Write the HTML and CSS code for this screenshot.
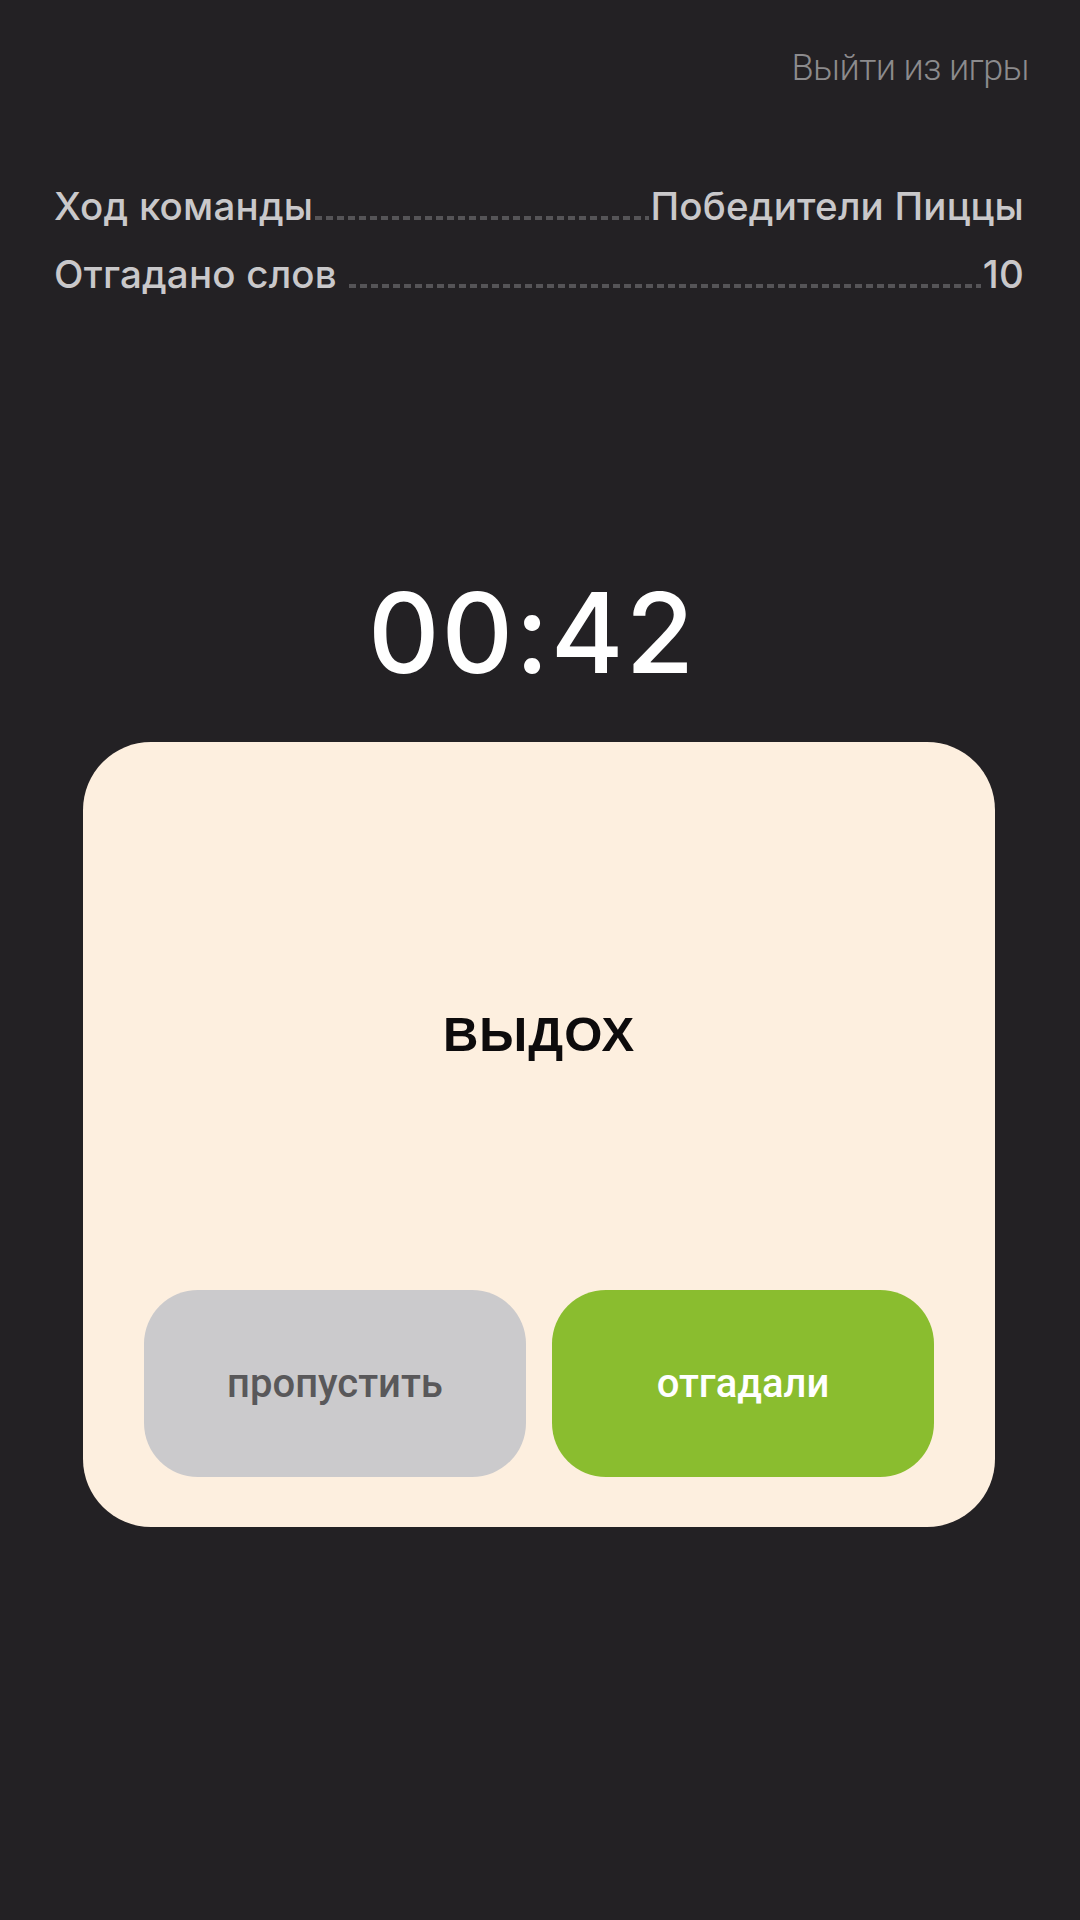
FILE: index.html
```html
<!DOCTYPE html>
<html lang="ru">
<head>
<meta charset="utf-8">
<link rel="stylesheet" href="styles.css">
<title>Игра</title>
</head>
<body>
<div class="screen">
  <header class="top">
    <a class="exit">Выйти из игры</a>
  </header>
  <section class="stats">
    <div class="row">
      <span class="label">Ход команды</span>
      <span class="dots"></span>
      <span class="value">Победители Пиццы</span>
    </div>
    <div class="row">
      <span class="label">Отгадано слов</span>
      <span class="dots gap"></span>
      <span class="value">10</span>
    </div>
  </section>
  <div class="timer">00:42</div>
  <section class="card">
    <div class="word-area">
      <div class="word">ВЫДОХ</div>
    </div>
    <div class="buttons">
      <button class="btn skip">пропустить</button>
      <button class="btn guess">отгадали</button>
    </div>
  </section>
</div>
</body>
</html>
```

FILE: styles.css
```css
html, body {
  margin: 0;
  padding: 0;
  background: #232124;
}
body {
  width: 1080px;
  height: 1920px;
  font-family: Inter, Roboto, "Liberation Sans", sans-serif;
}
.screen {
  display: flex;
  flex-direction: column;
}
.top {
  display: flex;
  justify-content: flex-end;
  padding: 46px 51px 0 0;
}
.exit {
  font-family: Roboto, "Liberation Sans", sans-serif;
  font-weight: 300;
  font-size: 36px;
  line-height: 44px;
  color: #8c8b8d;
  letter-spacing: -0.6px;
}
.stats {
  display: flex;
  flex-direction: column;
  gap: 20px;
  padding: 92px 56px 0 54px;
}
.row {
  display: flex;
  align-items: baseline;
  font-weight: 500;
  font-size: 38.5px;
  line-height: 48px;
  color: #c9c8ca;
  letter-spacing: 0.2px;
}
.label, .value {
  white-space: nowrap;
}
.dots {
  flex: 1;
  height: 4px;
  margin: 0 2px;
  background: repeating-linear-gradient(90deg, #555457 0 7px, transparent 7px 11px);
}
.dots.gap {
  margin-left: 12px;
}
.timer {
  margin-top: 275px;
  padding-right: 16px;
  text-align: center;
  font-family: Inter, sans-serif;
  font-weight: 500;
  font-size: 111px;
  line-height: 120px;
  color: #ffffff;
  letter-spacing: 2px;
}
.card {
  margin: 49px 85px 0 83px;
  height: 785px;
  box-sizing: border-box;
  background: #fdefdf;
  border-radius: 68px;
  padding: 0 61px 50px 61px;
  display: flex;
  flex-direction: column;
}
.word-area {
  height: 548px;
  box-sizing: border-box;
  padding-top: 36px;
  display: flex;
  align-items: center;
  justify-content: center;
}
.word {
  font-family: "Liberation Sans", Arial, sans-serif;
  font-weight: 700;
  font-size: 49px;
  letter-spacing: 1px;
  color: #0d0b0c;
}
.buttons {
  display: grid;
  grid-template-columns: 1fr 1fr;
  gap: 26px;
}
.btn {
  height: 187px;
  border: none;
  border-radius: 54px;
  font-family: Roboto, "Liberation Sans", sans-serif;
  font-weight: 500;
  font-size: 40px;
  padding: 0;
}
.skip {
  background: #cbcacc;
  color: #59585a;
}
.guess {
  background: #8abd2f;
  color: #ffffff;
}
```
